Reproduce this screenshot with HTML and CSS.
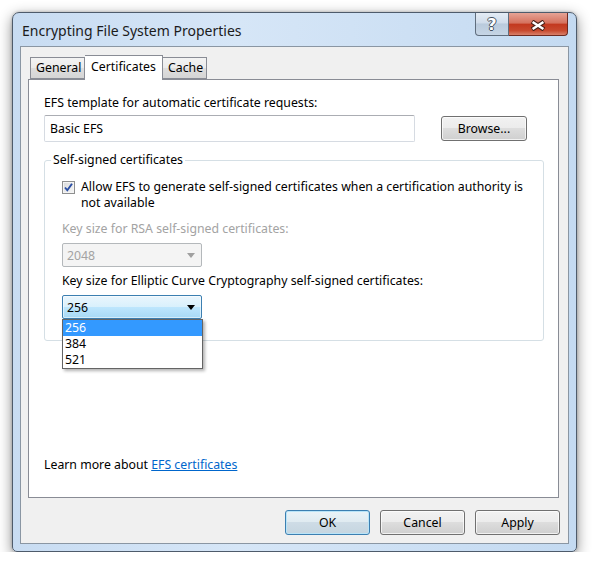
FILE: index.html
```html
<!DOCTYPE html>
<html lang="en">
<head>
  <meta charset="UTF-8" />
  <title>Encrypting File System Properties</title>
  <link rel="stylesheet" href="styles.css">
</head>
<body>
  <div class="window">
    <div class="titlebar">
      <span class="title">Encrypting File System Properties</span>
      <div class="caption-btns">
        <span class="cap-help">?</span>
        <span class="cap-close">
          <svg width="16" height="11" viewBox="0 0 16 11">
            <path d="M2 1.5 L14 9.5 M14 1.5 L2 9.5" stroke="#4a2118" stroke-width="4.6" fill="none"/>
            <path d="M2.6 1.9 L13.4 9.1 M13.4 1.9 L2.6 9.1" stroke="#fff" stroke-width="2.4" fill="none"/>
          </svg>
        </span>
      </div>
    </div>

    <div class="client">
      <div class="tabs">
        <span class="tab first">General</span>
        <span class="tab active">Certificates</span>
        <span class="tab">Cache</span>
      </div>

      <div class="panel">
        <div class="label">EFS template for automatic certificate requests:</div>
        <div class="template-row">
          <div class="textbox">Basic EFS</div>
          <button class="btn browse">Browse...</button>
        </div>

        <fieldset class="group">
          <legend>Self-signed certificates</legend>
          <div class="group-body">
            <div class="check-row">
              <span class="checkbox">
                <svg width="11" height="11" viewBox="0 0 11 11">
                  <path d="M2 5.5 L4.3 8.3 L9 1.8" stroke="#2a4ea4" stroke-width="1.9" fill="none"/>
                </svg>
              </span>
              <span class="check-text">Allow EFS to generate self-signed certificates when a certification authority is<br>not available</span>
            </div>

            <div class="label disabled sub">Key size for RSA self-signed certificates:</div>
            <div class="combo is-disabled">
              <span>2048</span>
              <span class="arrow"></span>
            </div>

            <div class="label sub">Key size for Elliptic Curve Cryptography self-signed certificates:</div>
            <div class="combo-wrap">
              <div class="combo is-open">
                <span>256</span>
                <span class="arrow"></span>
              </div>
              <ul class="dropdown">
                <li class="selected">256</li>
                <li>384</li>
                <li>521</li>
              </ul>
            </div>
          </div>
        </fieldset>

        <div class="learn">Learn more about <a href="#">EFS certificates</a></div>
      </div>

      <div class="buttons">
        <button class="btn default">OK</button>
        <button class="btn">Cancel</button>
        <button class="btn">Apply</button>
      </div>
    </div>
  </div>
</body>
</html>
```

FILE: styles.css
```css
body {
  margin: 0;
  background: #fff;
  font-family: 'Noto Sans', 'Open Sans', sans-serif;
  font-size: 12.3px;
  color: #000;
}

.window {
  box-sizing: border-box;
  width: 565px;
  height: 540px;
  margin: 12px 0 0 12px;
  padding: 0 7px 7px 7px;
  display: flex;
  flex-direction: column;
  background: linear-gradient(to right, #c8dcf2, #d6e6f7 40%, #c4daf1);
  border: 1px solid #4e5b6b;
  border-radius: 7px 7px 5px 5px;
  box-shadow: 0 4px 14px rgba(0,0,0,0.45), 0 0 3px rgba(0,0,0,0.25);
}

.titlebar {
  height: 33px;
  display: flex;
  align-items: flex-start;
}
.title {
  margin: 8px 0 0 2px;
  font-size: 14px;
  line-height: 20px;
  color: #1b1b1b;
}
.caption-btns {
  margin-left: auto;
  margin-right: 1px;
  display: flex;
}
.cap-help,
.cap-close {
  box-sizing: border-box;
  height: 23px;
  display: flex;
  align-items: center;
  justify-content: center;
}
.cap-help {
  width: 34px;
  border: 1px solid #5f6d7d;
  border-top: none;
  border-radius: 0 0 0 4px;
  background: linear-gradient(#e4ecf5, #d0dcea 45%, #b9cadc 50%, #c6d5e5);
  font-family: 'DejaVu Sans', sans-serif;
  font-weight: bold;
  font-size: 16px;
  color: #fff;
  text-shadow: 1px 0 #46515e, -1px 0 #46515e, 0 1px #46515e, 0 -1px #46515e;
}
.cap-close {
  width: 59px;
  border: 1px solid #6e2a20;
  border-top: none;
  border-left: none;
  border-radius: 0 0 4px 0;
  background: linear-gradient(#e6a395, #d5725e 45%, #c3391f 52%, #c84a2f 80%, #d8806a);
  padding-top: 2px;
}

.client {
  flex: 1;
  display: flex;
  flex-direction: column;
  padding: 8px 9px 0 7px;
  background: #f0f0f0;
  border: 1px solid #8a96a3;
}

.tabs {
  height: 24px;
  display: flex;
  align-items: flex-end;
  position: relative;
  z-index: 1;
}
.tab {
  box-sizing: border-box;
  height: 22px;
  padding: 0 5px;
  line-height: 20px;
  text-align: center;
  border: 1px solid #898c95;
  border-left: none;
  background: linear-gradient(#f3f3f3, #ebebeb 50%, #dedede 50%, #d5d5d5);
}
.tab.first {
  margin-left: 2px;
  border-left: 1px solid #898c95;
  width: 55px;
}
.tab.active {
  height: 25px;
  width: 78px;
  margin-bottom: -1px;
  line-height: 21px;
  background: #fff;
  border-bottom: none;
}
.tab:last-child {
  width: 44px;
}

.panel {
  flex: 1;
  display: flex;
  flex-direction: column;
  padding: 15px 14px 24px 15px;
  background: #fff;
  border: 1px solid #898c95;
}

.label {
  line-height: 16px;
}
.label.sub {
  margin-top: 6px;
}
.disabled {
  color: #a3a3a3;
}

.template-row {
  display: flex;
  align-items: center;
  gap: 26px;
  margin-top: 4px;
}
.textbox {
  box-sizing: border-box;
  width: 371px;
  height: 27px;
  padding: 0 5px;
  line-height: 25px;
  border: 1px solid #d6dbe2;
  border-top-color: #abadb3;
  border-radius: 2px;
}

.btn {
  box-sizing: border-box;
  width: 85px;
  height: 25px;
  padding: 0;
  font: inherit;
  color: #000;
  border: 1px solid #707070;
  border-radius: 3px;
  background: linear-gradient(#f2f2f2, #ebebeb 50%, #dddddd 50%, #cfcfcf);
  box-shadow: inset 0 0 0 1px rgba(255,255,255,0.7);
}
.btn.browse {
  width: 86px;
}
.btn.default {
  border-color: #3c7fb1;
  background: linear-gradient(#eaf3f8, #dfeaf0 50%, #cedce6 50%, #c5d5e0);
  box-shadow: inset 0 0 0 1px #b9e4f8;
}

.group {
  margin: 10px 0 0;
  padding: 11px 14px 21px 6px;
  border: 1px solid #d5dfe5;
  border-radius: 3px;
}
.group legend {
  padding: 0 2px;
  line-height: 16px;
}
.group-body {
  padding-left: 11px;
}

.check-row {
  display: flex;
  gap: 6px;
  line-height: 16px;
}
.checkbox {
  flex: none;
  box-sizing: border-box;
  width: 13px;
  height: 13px;
  margin-top: 2px;
  display: flex;
  align-items: center;
  justify-content: center;
  border: 1px solid #8e8f8f;
  background: linear-gradient(135deg, #d9dadb, #f6f6f6);
  box-shadow: inset 0 0 0 1px #f4f4f4;
}
.label.disabled.sub {
  margin-top: 10px;
}

.combo {
  box-sizing: border-box;
  width: 140px;
  height: 24px;
  margin-top: 6px;
  padding: 0 6px 0 4px;
  display: flex;
  align-items: center;
  justify-content: space-between;
  border-radius: 2px;
}
.combo .arrow {
  width: 0;
  height: 0;
  border-left: 4.5px solid transparent;
  border-right: 4.5px solid transparent;
  border-top: 5px solid #000;
}
.combo.is-disabled {
  color: #a3a3a3;
  border: 1px solid #b4b8bb;
  background: #f4f4f4;
}
.combo.is-disabled .arrow {
  border-top-color: #a0a0a0;
}
.combo.is-open {
  border: 1px solid #3c7fb1;
  background: linear-gradient(#eaf6fd, #d9f0fc 50%, #bee6fd 50%, #a7d9f5);
  box-shadow: inset 0 0 0 1px rgba(255,255,255,0.5);
}

.combo-wrap {
  position: relative;
}
.dropdown {
  position: absolute;
  top: 100%;
  left: 0;
  box-sizing: border-box;
  width: 141px;
  margin: 0;
  padding: 0;
  list-style: none;
  background: #fff;
  border: 1px solid #646464;
  box-shadow: 2px 2px 3px rgba(0,0,0,0.3);
  z-index: 2;
}
.dropdown li {
  height: 16px;
  line-height: 16px;
  padding-left: 2px;
}
.dropdown li.selected {
  background: #3399ff;
  color: #fff;
}

.learn {
  margin-top: auto;
  line-height: 16px;
}
.learn a {
  color: #0066cc;
}

.buttons {
  display: flex;
  justify-content: flex-end;
  gap: 10px;
  margin: 12px -1px 8px 0;
}
```
